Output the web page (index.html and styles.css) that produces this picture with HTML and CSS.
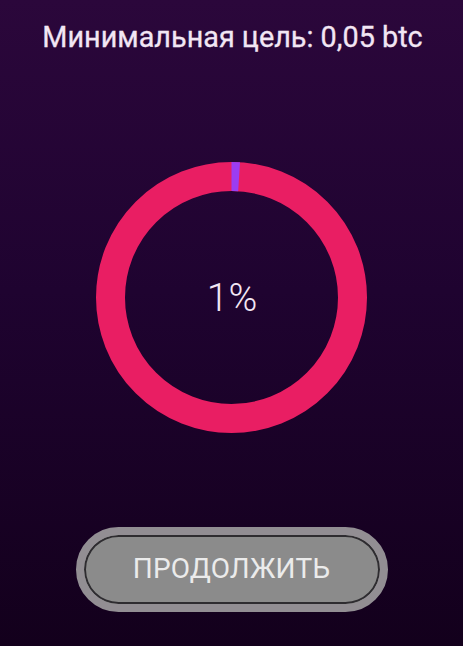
FILE: index.html
```
<!DOCTYPE html>
<html lang="ru">
  <head>
    <meta charset="utf-8" />
    <title>Цель</title>
    <link rel="stylesheet" href="styles.css">
  </head>
  <body>
    <main class="goal">
      <h1 class="goal-title">Минимальная цель: 0,05 btc</h1>

      <div class="progress">
        <svg class="progress-ring" width="271" height="271" viewBox="0 0 271 271">
          <circle cx="135.5" cy="135.5" r="121" fill="none" stroke="#e91e63" stroke-width="29" />
          <!-- done part: 1% of the circle, starting at 12 o'clock -->
          <path d="M135.5 14.5 A121 121 0 0 1 143.1 14.74" fill="none" stroke="#9b3df2" stroke-width="29" />
        </svg>
        <span class="progress-value">1%</span>
      </div>

      <button class="btn-next">ПРОДОЛЖИТЬ</button>
    </main>
  </body>
</html>
```

FILE: styles.css
```
html, body {
  height: 100%;
}
body {
  margin: 0;
  font-family: Roboto, 'Noto Sans', sans-serif;
  background: linear-gradient(#2b073b, #1f0330 45%, #13001c);
  color: #f2e6f4;
}

.goal {
  height: 100%;
  display: flex;
  flex-direction: column;
  align-items: center;
}
.goal-title {
  margin: 19px 0 0 2px;
  font-size: 28.8px;
  font-weight: 400;
  line-height: 36px;
  -webkit-text-stroke: 0.3px #f2e6f4;
}

.progress {
  position: relative;
  margin-top: 107px;
  width: 271px;
  height: 271px;
}
.progress-ring {
  display: block;
}
.progress-value { /* label centred over the ring */
  position: absolute;
  inset: 0;
  display: flex;
  align-items: center;
  justify-content: center;
  padding-left: 1px;
  font-size: 39px;
  font-weight: 300;
}

.btn-next {
  margin-top: 94px;
  width: 312px;
  height: 85px;
  border-radius: 43px;
  border: 8px solid #928e93;
  background: #8b8b8b;
  box-shadow: inset 0 0 0 2px #2e2c30;
  color: #ebebeb;
  font-family: Roboto, 'Noto Sans', sans-serif;
  font-size: 28px;
  letter-spacing: 0.2px;
  padding: 0 0 2px 0;
}
```
